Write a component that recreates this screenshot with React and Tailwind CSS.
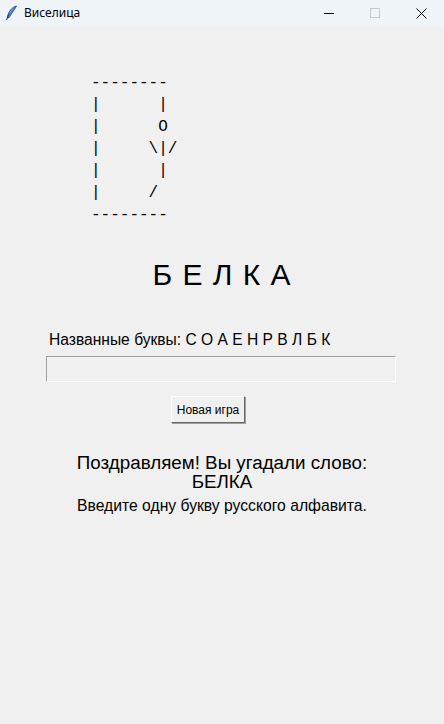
import React from "react";

const gallows = [
  "--------",
  "|      |",
  "|      O",
  "|     \\|/",
  "|      |",
  "|     /",
  "--------",
];

const TitleBar = () => (
  <div className="h-[26px] bg-[#eff4f9] flex items-center text-[12px] text-black font-['Noto_Sans',sans-serif]">
    <svg width="14" height="16" viewBox="0 0 14 16" className="ml-[4px] mr-[6px]">
      <path d="M12.5 1 C8 2 4.5 6.5 3.2 12.5 L5 12.8 C7 9 10 5.5 12.5 1 Z" fill="#5b8fd8" stroke="#1d3f7a" strokeWidth="0.8" />
      <path d="M2.6 15 L5.2 8.5" stroke="#1d3f7a" strokeWidth="1" />
    </svg>
    <span>Виселица</span>
    <div className="ml-auto flex items-center h-full">
      <div className="w-[46px] h-full flex items-center justify-center">
        <div className="w-[10px] h-px bg-black" />
      </div>
      <div className="w-[46px] h-full flex items-center justify-center">
        <div className="w-[10px] h-[10px] border border-[#c8c8c8]" />
      </div>
      <div className="w-[46px] h-full flex items-center justify-center">
        <svg width="11" height="11" viewBox="0 0 11 11">
          <path d="M0.5 0.5 L10.5 10.5 M10.5 0.5 L0.5 10.5" stroke="#000" strokeWidth="1" />
        </svg>
      </div>
    </div>
  </div>
);

export default function App() {
  return (
    <div className="w-[444px] h-[724px] bg-[#f0f0f0] flex flex-col overflow-hidden">
      <TitleBar />
      <div className="flex flex-col font-['Liberation_Sans',Arial,sans-serif] text-black">
        <pre className="mt-[46px] ml-[91px] font-['Liberation_Mono',monospace] text-[16px] leading-[22px] text-black">
          {gallows.join("\n")}
        </pre>
        <div className="mt-[32px] text-center text-[30px] leading-[34px] tracking-[1px]">Б Е Л К А</div>
        <div className="mt-[39px] ml-[49px] text-[15.6px] leading-[18px]">
          Названные буквы: С О А Е Н Р В Л Б К
        </div>
        <div className="mt-[7px] ml-[46px] w-[350px] h-[26px] border border-t-[#a0a0a0] border-l-[#a0a0a0] border-r-white border-b-white bg-[#f0f0f0]" />
        <div className="mt-[14px] ml-[171px]">
          <div className="w-[74px] h-[27px] flex items-center justify-center text-[12px] border border-t-white border-l-white border-r-[#696969] border-b-[#696969] bg-[#f0f0f0] shadow-[1px_1px_0_#a0a0a0]">
            Новая игра
          </div>
        </div>
        <div className="mt-[30px] text-center text-[18.8px] leading-[19px]">
          Поздравляем! Вы угадали слово:
          <br />
          БЕЛКА
        </div>
        <div className="mt-[6px] text-center text-[15.7px] leading-[18px]">
          Введите одну букву русского алфавита.
        </div>
      </div>
    </div>
  );
}
